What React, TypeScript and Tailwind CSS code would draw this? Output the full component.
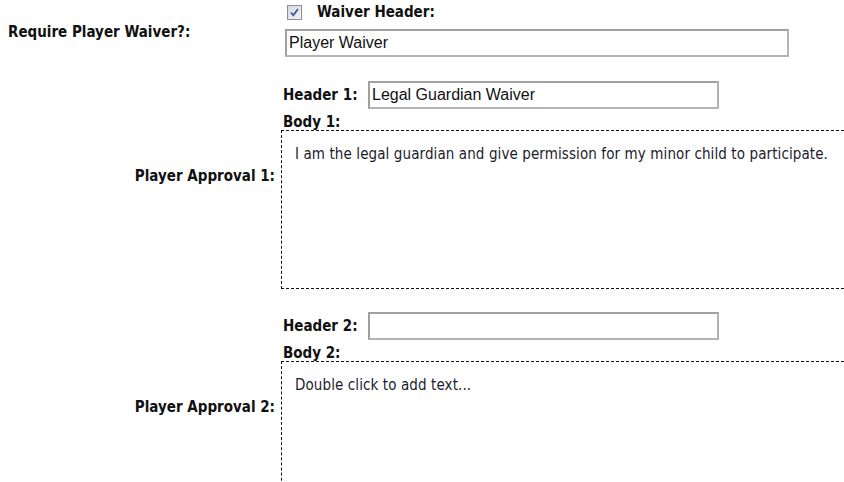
const labelFont = "font-['Tahoma','DejaVu_Sans_Condensed','DejaVu_Sans',sans-serif]"
const inputFont = "font-['Liberation_Sans',Arial,sans-serif]"

const CheckBox = () => (
  <div className="w-[15px] h-[15px] border border-[#8f8f8f] bg-gradient-to-br from-[#d6d9e2] to-[#f2f3f6] flex items-center justify-center">
    <svg width="11" height="11" viewBox="0 0 11 11">
      <path d="M2 5.5 L4.3 8.3 L9 2" fill="none" stroke="#3d5a9b" strokeWidth="1.8" />
    </svg>
  </div>
)

const TextBox = ({ value, className }: { value: string; className: string }) => (
  <div
    className={`h-[28px] border-2 border-[#b4b4b4] border-t-[#a0a0a0] border-l-[#a0a0a0] bg-white flex items-center px-[2px] text-[16px] text-[#111] ${inputFont} ${className}`}
  >
    {value}
  </div>
)

const Approval = ({ n, header, body, boxH, labelTop }: { n: number; header: string; body: string; boxH: string; labelTop: string }) => (
  <div className="flex">
    <div className={`w-[281px] shrink-0 text-right pr-[6px] ${labelTop}`}>
      <span className="text-[15px] leading-[18px] font-bold text-[#111]">Player Approval {n}:</span>
    </div>
    <div className="flex-1 flex flex-col">
      <div className="flex items-center">
        <span className="w-[87px] pl-[2px] text-[15px] font-bold text-[#111]">Header {n}:</span>
        <TextBox value={header} className="w-[351px]" />
      </div>
      <div className="pl-[2px] mt-[5px] text-[15px] font-bold text-[#111] leading-[16px]">Body {n}:</div>
      <div className={`border-t border-b border-l border-dashed border-[#111] ${boxH} pl-[13px] pt-[14px] text-[15px] leading-[18px] tracking-[0.1px] text-[#1c1c2c]`}>
        {body}
      </div>
    </div>
  </div>
)

export default function App() {
  return (
    <div className={`w-[844px] h-[482px] bg-white overflow-hidden ${labelFont}`}>
      <div className="flex pt-[2px]">
        <div className="w-[281px] shrink-0 pl-[8px] pt-[5px] flex items-center">
          <span className="text-[15px] font-bold text-[#111]">Require Player Waiver?:</span>
        </div>
        <div className="flex flex-col pl-[4px]">
          <div className="h-[20px] flex items-center gap-[15px] pl-[2px]">
            <CheckBox />
            <span className="text-[15px] font-bold text-[#111]">Waiver Header:</span>
          </div>
          <TextBox value="Player Waiver" className="w-[504px] mt-[7px]" />
        </div>
      </div>
      <div className="mt-[24px]">
        <Approval n={1} header="Legal Guardian Waiver" body="I am the legal guardian and give permission for my minor child to participate." boxH="h-[159px]" labelTop="pt-[83px]" />
      </div>
      <div className="mt-[23px]">
        <Approval n={2} header="" body="Double click to add text..." boxH="h-[140px]" labelTop="pt-[83px]" />
      </div>
    </div>
  )
}
